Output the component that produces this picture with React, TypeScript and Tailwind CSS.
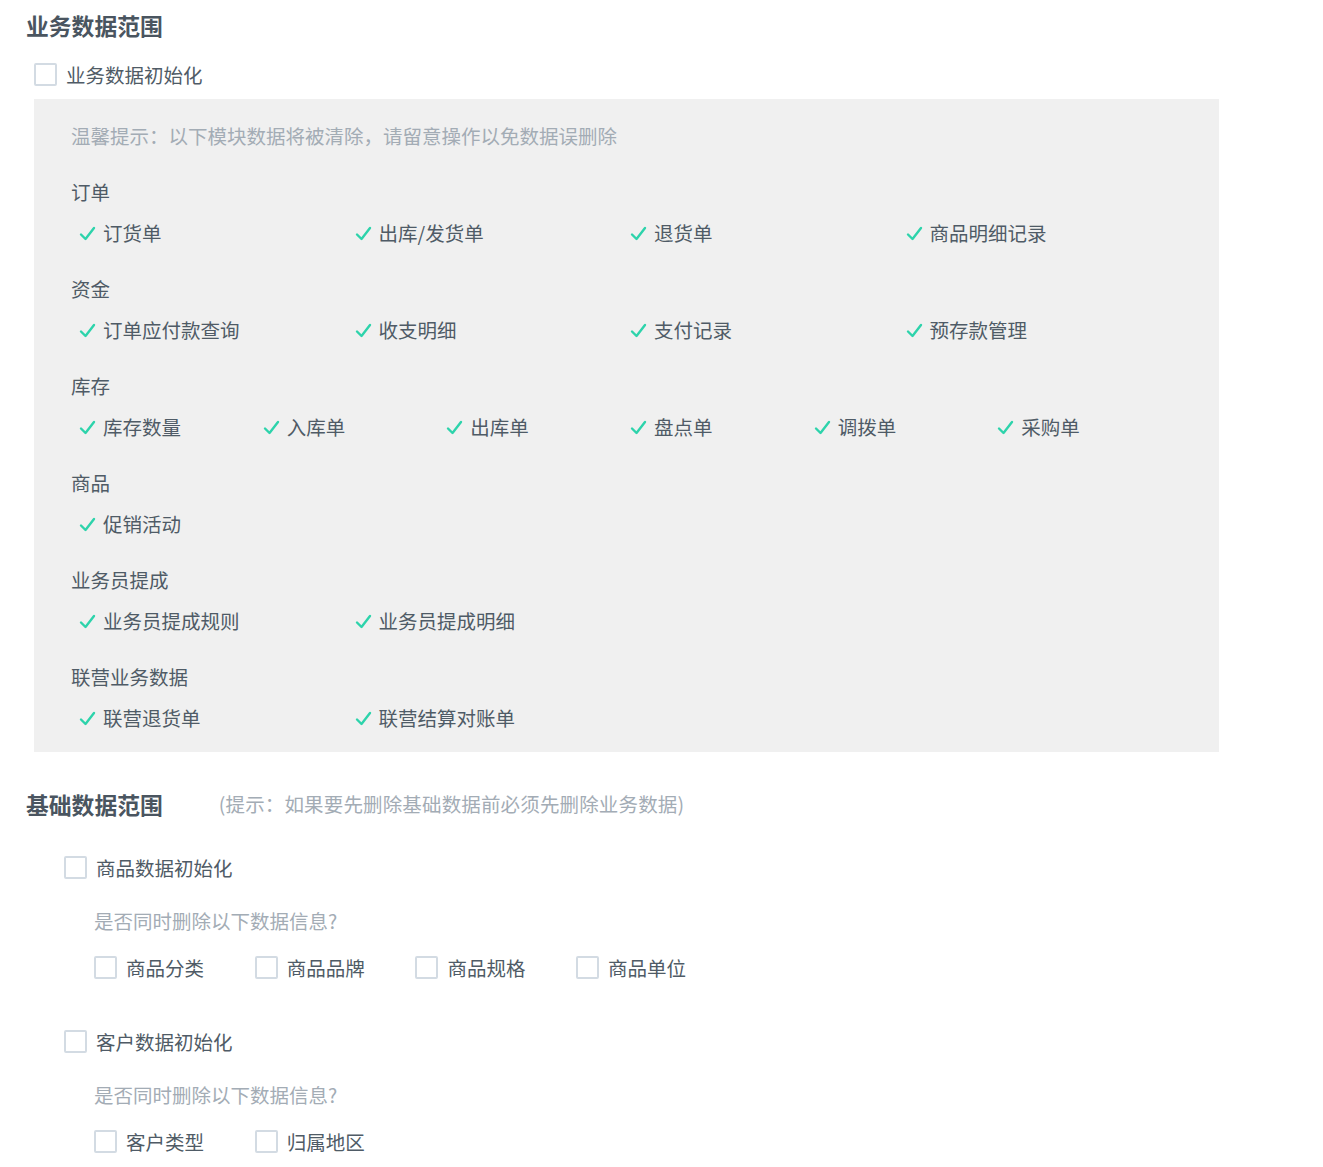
import React from 'react';

const font = { fontFamily: '"Noto Sans CJK SC", "Noto Sans", sans-serif' };

const GROUPS: { title: string; cols: 4 | 6; items: string[] }[] = [
  { title: '订单', cols: 4, items: ['订货单', '出库/发货单', '退货单', '商品明细记录'] },
  { title: '资金', cols: 4, items: ['订单应付款查询', '收支明细', '支付记录', '预存款管理'] },
  { title: '库存', cols: 6, items: ['库存数量', '入库单', '出库单', '盘点单', '调拨单', '采购单'] },
  { title: '商品', cols: 4, items: ['促销活动'] },
  { title: '业务员提成', cols: 4, items: ['业务员提成规则', '业务员提成明细'] },
  { title: '联营业务数据', cols: 4, items: ['联营退货单', '联营结算对账单'] },
];

function Box() {
  return <span className="inline-block w-[23px] h-[23px] border-2 border-[#d3dbe3] bg-white rounded-[2px] shrink-0" />;
}

function Check() {
  return (
    <svg width="17" height="15" viewBox="0 0 17 15" className="shrink-0">
      <path d="M2 8.5 L6.5 13 L15 2" fill="none" stroke="#2dd3ab" strokeWidth="2.4" strokeLinecap="round" strokeLinejoin="round" />
    </svg>
  );
}

function CheckLine({ label }: { label: string }) {
  return (
    <label className="flex items-center gap-[9px] text-[19.5px] text-[#4f5b66] leading-none">
      <Box />
      <span>{label}</span>
    </label>
  );
}

export default function App() {
  return (
    <div className="min-h-screen bg-white text-[#4f5b66] pl-[26px]" style={font}>
      {/* 业务数据范围 */}
      <h2 className="pt-[12px] text-[22.8px] font-bold text-[#4a5560] leading-[28px]">业务数据范围</h2>
      <div className="ml-[8px] mt-[23px]">
        <CheckLine label="业务数据初始化" />
      </div>
      <div className="ml-[8px] mt-[13px] w-[1185px] bg-[#f0f0f0] pl-[37px] pt-[24px] pb-[21px]">
        <p className="text-[19.5px] text-[#a3acb5] leading-[26px]">温馨提示：以下模块数据将被清除，请留意操作以免数据误删除</p>
        <div className="mt-[30px] flex flex-col gap-[30px]">
          {GROUPS.map(g => (
            <div key={g.title}>
              <div className="text-[19.5px] leading-[26px] text-[#4f5b66]">{g.title}</div>
              <div className={`mt-[15px] w-[1102px] grid ${g.cols === 6 ? 'grid-cols-6' : 'grid-cols-4'}`}>
                {g.items.map(it => (
                  <div key={it} className="flex items-center gap-[7px] pl-[8px] h-[26px] text-[19.5px] text-[#4f5b66]">
                    <Check />
                    <span>{it}</span>
                  </div>
                ))}
              </div>
            </div>
          ))}
        </div>
      </div>

      {/* 基础数据范围 */}
      <div className="mt-[39px] flex items-baseline">
        <h2 className="text-[22.8px] font-bold text-[#4a5560] leading-[28px]">基础数据范围</h2>
        <span className="ml-[56px] text-[19.5px] text-[#a3acb5] tracking-[0.15px] relative -top-[2px]">(提示：如果要先删除基础数据前必须先删除业务数据)</span>
      </div>

      <div className="ml-[38px] mt-[36px]">
        <CheckLine label="商品数据初始化" />
        <div className="ml-[30px] mt-[29px] text-[19.5px] leading-[26px] text-[#a3acb5]">是否同时删除以下数据信息?</div>
        <div className="ml-[30px] mt-[22px] flex">
          {['商品分类', '商品品牌', '商品规格', '商品单位'].map(t => (
            <div key={t} className="w-[160.7px]">
              <CheckLine label={t} />
            </div>
          ))}
        </div>

        <div className="mt-[51px]">
          <CheckLine label="客户数据初始化" />
        </div>
        <div className="ml-[30px] mt-[29px] text-[19.5px] leading-[26px] text-[#a3acb5]">是否同时删除以下数据信息?</div>
        <div className="ml-[30px] mt-[22px] flex">
          {['客户类型', '归属地区'].map(t => (
            <div key={t} className="w-[160.7px]">
              <CheckLine label={t} />
            </div>
          ))}
        </div>
      </div>
    </div>
  );
}
